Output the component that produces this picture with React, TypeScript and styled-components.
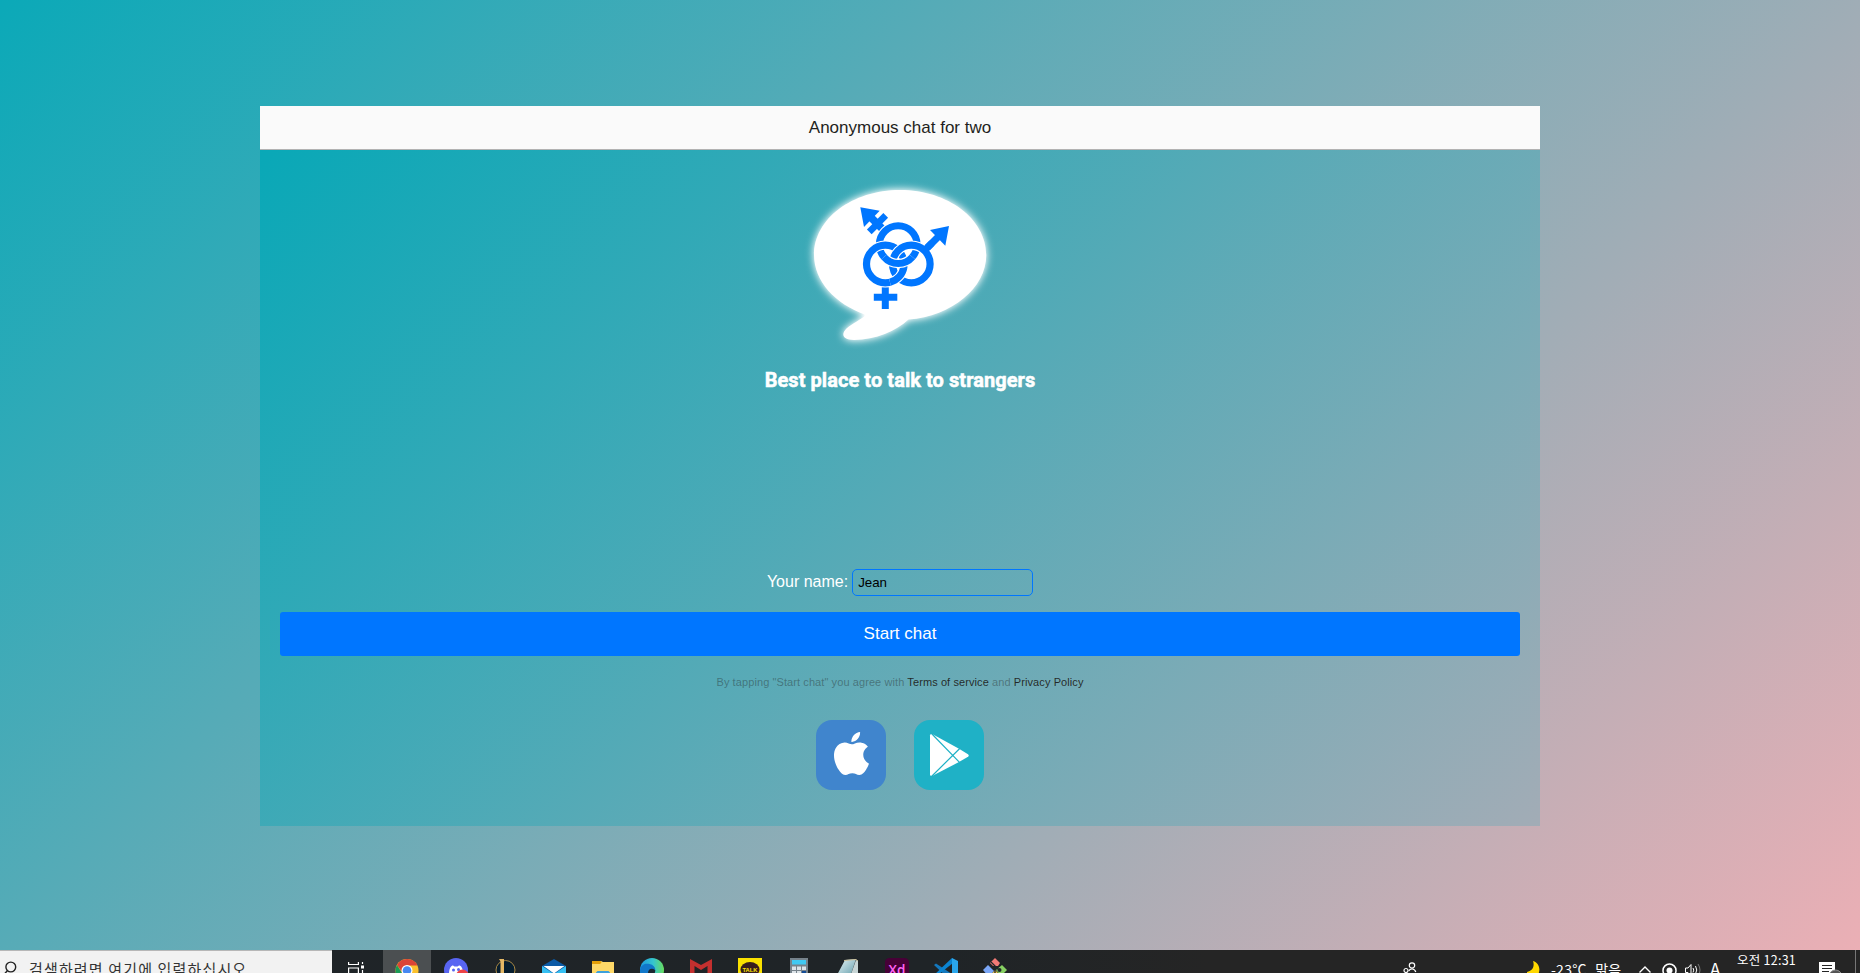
import React from 'react';
import styled, { createGlobalStyle } from 'styled-components';
import { SiApple } from 'react-icons/si';

const Global = createGlobalStyle`
  * { box-sizing: border-box; }
  html, body { margin: 0; height: 973px; overflow: hidden; }
  body { font-family: "Liberation Sans", Arial, sans-serif; }
`;

const Screen = styled.div`
  display: flex;
  flex-direction: column;
  width: 1860px;
  height: 973px;
  overflow: hidden;
`;

const Page = styled.main`
  height: 950px;
  flex: none;
  padding: 106px 60px 0 0;
  display: flex;
  justify-content: center;
  align-items: flex-start;
  background: linear-gradient(135deg, #0ba9b8 0%, #ebafb5 100%);
`;

const Panel = styled.section`
  width: 1280px;
  height: 720px;
  overflow: hidden;
  display: flex;
  flex-direction: column;
`;

const Header = styled.header`
  flex: none;
  height: 44px;
  background: #fafafa;
  border-bottom: 1px solid #b2b2b2;
  text-align: center;
  font-size: 17px;
  line-height: 43px;
  color: #1f1f21;
`;

const Body = styled.div`
  flex: none;
  height: 676px;
  display: flex;
  flex-direction: column;
  align-items: center;
  padding: 30px 20px 0;
  background: linear-gradient(135deg, #09a8b7 0%, #a2acb6 100%);
`;

const Logo = styled.svg`
  width: 200px;
  height: 170px;
  flex: none;
  display: block;
  overflow: visible;
`;

const Slogan = styled.h1`
  margin: 18px 0 0;
  font: 700 20px/24px Roboto, sans-serif;
  letter-spacing: 0.06px;
  -webkit-text-stroke: 0.5px #fff;
  color: #fff;
`;

const NameRow = styled.div`
  display: flex;
  align-items: center;
  gap: 4px;
  height: 27px;
  margin-top: 177px;
  font-size: 16px;
  color: #fff;
`;

const NameLabel = styled.label`
  padding-bottom: 2px;
`;

const NameInput = styled.input`
  width: 181px;
  height: 27px;
  padding: 1px 5px;
  border: 1px solid #0076ff;
  border-radius: 5px;
  background: transparent;
  font: 13.33px "Liberation Sans", Arial, sans-serif;
  color: #000;
  outline: none;
`;

const StartButton = styled.button`
  width: 100%;
  height: 44px;
  margin-top: 16px;
  flex: none;
  border: 0;
  border-radius: 3px;
  background: #0076ff;
  color: #fff;
  font: 17px/42px "Liberation Sans", Arial, sans-serif;
`;

const Terms = styled.p`
  margin: 20px 0 0;
  font-size: 11px;
  line-height: 13px;
  letter-spacing: 0.09px;
  color: rgba(31, 31, 33, 0.4);
`;

const TermsLink = styled.a`
  color: rgba(31, 31, 33, 0.95);
`;

const Stores = styled.div`
  display: flex;
  gap: 28px;
  margin-top: 31px;
`;

const StoreTile = styled.a<{ $color: string }>`
  width: 70px;
  height: 70px;
  display: flex;
  align-items: center;
  justify-content: center;
  border-radius: 16px;
  background: ${p => p.$color};
  color: #fff;
`;

const AppleMark = styled(SiApple)`
  margin: 0 0 3px;
`;

const Taskbar = styled.footer`
  height: 23px;
  flex: none;
  display: flex;
  overflow: hidden;
  background: linear-gradient(90deg, #1f2428 0%, #1f2427 50%, #252525 65%);
  color: #fff;
  font-family: "Noto Sans CJK KR", sans-serif;
`;

const SearchBox = styled.div`
  width: 332px;
  height: 23px;
  flex: none;
  display: flex;
  gap: 11px;
  padding-left: 3px;
  border-top: 1px solid #b7b7b7;
  background: #f2f2f2;
  color: #333;
  font-size: 15px;
  line-height: 20px;
  white-space: nowrap;
  svg { flex: none; margin-top: 10px; }
`;

const SearchText = styled.span`
  margin-top: 8px;
  letter-spacing: 1.15px;
`;

const TaskView = styled.div`
  width: 51px;
  height: 23px;
  flex: none;
  padding: 12px 0 0 16px;
  svg { display: block; }
`;

const AppSlot = styled.div<{ $active?: boolean }>`
  width: ${p => (p.$active ? 48 : 49)}px;
  height: 23px;
  flex: none;
  display: flex;
  justify-content: center;
  padding-top: 8px;
  background: ${p => (p.$active ? '#4b4f51' : 'transparent')};
  svg { flex: none; display: block; }
`;

const Tray = styled.div`
  margin-left: auto;
  width: 457px;
  flex: none;
  display: flex;
  height: 23px;
  white-space: nowrap;
  svg { flex: none; display: block; }
`;

const TrayItem = styled.div<{ $w: number; $top: number }>`
  width: ${p => p.$w}px;
  flex: none;
  padding-top: ${p => p.$top}px;
  line-height: 18px;
`;

const Weather = styled(TrayItem)`
  font-size: 14px;
  letter-spacing: 0.25px;
  word-spacing: 5px;
`;

const Clock = styled(TrayItem)`
  font-size: 12.5px;
  letter-spacing: 0.25px;
`;

const Ime = styled(TrayItem)`
  font-size: 17px;
`;

const DesktopEdge = styled.div`
  width: 5px;
  height: 23px;
  margin-left: auto;
  border-left: 1px solid #777;
`;

/* A ring segment with a thin white outline, so that it reads as passing over the others. */
const Strand = ({ d }: { d: string }) => (
  <g fill="none">
    <path d={d} stroke="#fff" strokeWidth="9.4" />
    <path d={d} stroke="#0076ff" strokeWidth="7.2" />
  </g>
);

const ring = (cx: number, cy: number, r = 18.8) =>
  `M${cx - r} ${cy}a${r} ${r} 0 1 1 ${2 * r} 0a${r} ${r} 0 1 1 ${-2 * r} 0`;

const GenderLogo = () => (
  <Logo viewBox="800 180 200 170">
    <defs>
      <filter id="glow" x="-20%" y="-20%" width="140%" height="140%">
        <feGaussianBlur stdDeviation="4" />
        <feComponentTransfer>
          <feFuncA type="linear" slope="1.25" />
        </feComponentTransfer>
      </filter>
      <path
        id="bubble"
        d="M900 190C948 190 986.300 219 986.300 255C986.300 288 952 316 908.500 319.600C896 331 876 340 854 340C842 340 841 333.500 846.500 328.500C853 323 861 319.500 866 315C835 304 814 281 814 255C814 219 852 190 900 190Z"
      />
    </defs>
    <use href="#bubble" fill="#fff" filter="url(#glow)" />
    <use href="#bubble" fill="#fff" />
    <g fill="none" stroke="#0076ff">
      <path d="M885.300 283V309M873.800 297.200H897.300" strokeWidth="7" />
      <path d="M924.500 250.500L942 233" strokeWidth="7" />
      <path d="M868 214.500L886 232.500" strokeWidth="7.600" />
      <path d="M869.300 231.800L885.700 215.400" strokeWidth="6.600" />
    </g>
    <path d="M860.300 207.200L879.700 210.700L864 227Z" fill="#0076ff" />
    <path d="M949 226L945.300 245.700L930 230Z" fill="#0076ff" />
    <Strand d={ring(898.2, 244.6)} />
    <Strand d={ring(885.3, 264)} />
    <Strand d={ring(911.3, 264)} />
    <path d="M923 252L932 243" stroke="#0076ff" strokeWidth="7" />
    <Strand d="M903.8 267.500A18.800 18.800 0 0 1 890 282.200" />
    <Strand d="M884 257A18.800 18.800 0 0 0 912.400 257" />
  </Logo>
);

const PlayLogo = () => (
  <svg width="70" height="70" viewBox="0 0 70 70">
    <path d="M16 15.500Q16 13.500 18 14L19.500 14.800L45 28.700L54 34.200Q55.500 35.500 54 36.800L45 42L19.500 55.300Q16 57 16 54.500Z" fill="#fff" />
    <path d="M17.500 13.500L46 42.800M17.500 56.500L46 28.200" stroke="#1fb1c6" strokeWidth="1.200" />
  </svg>
);

const icons: React.ReactNode[] = [
  <svg key="discord" width="26" height="24" viewBox="0 0 26 24">
    <circle cx="13" cy="12" r="12" fill="#5865f2" />
    <path d="M6 17C6 10 8 7.500 10 7.500L11.500 8.500H14.500L16 7.500C18 7.500 20 10 20 15L10 17Z" fill="#fff" />
    <circle cx="10.500" cy="12" r="1.500" fill="#5865f2" />
    <circle cx="15.500" cy="11.500" r="1.500" fill="#5865f2" />
    <circle cx="19.500" cy="18" r="6.500" fill="#ed4245" />
  </svg>,
  <svg key="league" width="22" height="24" viewBox="0 0 22 24">
    <circle cx="11.500" cy="12" r="9.500" fill="#071d2e" stroke="#a98743" strokeWidth="1" />
    <path d="M5 1H10V20H5L6.500 17V3.500Z" fill="#e3b765" />
  </svg>,
  <svg key="mail" width="24" height="24" viewBox="0 0 24 24">
    <path d="M0 8L12 1L24 8V22H0Z" fill="#0c5aa6" />
    <path d="M0 8L12 16L24 8V24H0Z" fill="#35bff2" />
    <path d="M1.500 8H22.500L12 15.500Z" fill="#fff" />
  </svg>,
  <svg key="folder" width="22" height="24" viewBox="0 0 22 24">
    <path d="M0 3H9L11 4H22V22H0Z" fill="#ffd968" />
    <path d="M0 3H8.500L9.500 4.500L8 6H0Z" fill="#e6a008" />
    <path d="M4 14.500L5.500 13H16.500L18 14.500V24H4Z" fill="#3ca0dc" />
  </svg>,
  <svg key="edge" width="24" height="24" viewBox="0 0 24 24">
    <defs>
      <linearGradient id="edgeTop">
        <stop offset="0" stopColor="#1c9ade" />
        <stop offset=".55" stopColor="#35c5cf" />
        <stop offset="1" stopColor="#68dd5d" />
      </linearGradient>
    </defs>
    <circle cx="12" cy="12" r="12" fill="url(#edgeTop)" />
    <path d="M0 12C1 6 6 5 9.500 6C14 7 16 10 15 13C13 10 8 12 9 17L12 24C4 24 0 19 0 12Z" fill="#1177c9" />
    <path d="M8 15C8 11 12 9.500 15 12C16 13 14 15 15 17L10 18Z" fill="#1b2730" />
  </svg>,
  <svg key="mcafee" width="22" height="24" viewBox="0 0 22 24">
    <path d="M0 1L11 7L22 1V24H17.500V8L11 12L4.500 8V24H0Z" fill="#c3302f" />
  </svg>,
  <svg key="talk" width="24" height="24" viewBox="0 0 24 24">
    <path d="M0 0H24V24H0Z" fill="#fae100" />
    <ellipse cx="12" cy="11.500" rx="9.500" ry="7.500" fill="#371d1e" />
    <text x="12" y="13.500" textAnchor="middle" fontFamily="Liberation Sans" fontWeight="700" fontSize="5.800" fill="#fae100">TALK</text>
  </svg>,
  <svg key="calc" width="18" height="24" viewBox="0 0 18 24">
    <path d="M0 0H18V24H0Z" fill="#76828b" />
    <path d="M2 2H16V6.500H2Z" fill="#40c9f2" />
    <path d="M2 8.500H6V12H2ZM7 8.500H11V12H7ZM12 8.500H16V12H12ZM2 13H6V16H2ZM7 13H11V16H7Z" fill="#dce3e8" />
    <path d="M12 13H16V16H12Z" fill="#134c97" />
  </svg>,
  <svg key="notepad" width="22" height="24" viewBox="0 0 22 24">
    <defs>
      <linearGradient id="pad" x2="1" y2="1">
        <stop offset="0" stopColor="#e9f6f8" />
        <stop offset="1" stopColor="#5e9aa8" />
      </linearGradient>
    </defs>
    <path d="M8 2L19 1L13 19L0 17Z" fill="url(#pad)" />
    <path d="M19 2L21 3V19H13Z" fill="#c7d5d5" />
    <path d="M7 2.500L19 1.500L21 3" stroke="#cbbf99" fill="none" />
  </svg>,
  <svg key="xd" width="24" height="24" viewBox="0 0 24 24">
    <rect width="24" height="24" rx="4.500" fill="#470137" />
    <text x="12" y="17" textAnchor="middle" fontFamily="Open Sans" fontWeight="600" fontSize="13.500" fill="#ff61f6">Xd</text>
  </svg>,
  <svg key="code" width="24" height="24" viewBox="0 0 24 24">
    <path d="M0 7L2 5.500L24 20V24H18Z" fill="#1478bd" />
    <path d="M0 17L18 0L19 5L2 18.500Z" fill="#0b84d1" />
    <path d="M18 0L24 3V21L18 24Z" fill="#2aa6ec" />
  </svg>,
  <svg key="git" width="24" height="24" viewBox="0 0 24 24">
    <path d="M7 5L12 0L17 5L15 8L10 8Z" fill="#f37a76" />
    <path d="M0 12L5 7L11 13L6 19Z" fill="#7ba7f7" />
    <path d="M24 12L19 7L13 12L18 18Z" fill="#87d062" />
    <path d="M12 12L17 17L12 24L7 18Z" fill="#f4c84d" />
    <path d="M8 4L16 12M12 9V16" stroke="#20272a" strokeWidth="1.300" />
    <circle cx="16.500" cy="12" r="2" fill="#20272a" />
  </svg>,
];

export default function App() {
  return (
    <Screen>
      <Global />
      <Page>
        <Panel>
          <Header>Anonymous chat for two</Header>
          <Body>
            <GenderLogo />
            <Slogan>Best place to talk to strangers</Slogan>
            <NameRow>
              <NameLabel htmlFor="name">Your name:</NameLabel>
              <NameInput id="name" defaultValue="Jean" />
            </NameRow>
            <StartButton>Start chat</StartButton>
            <Terms>
              By tapping "Start chat" you agree with <TermsLink>Terms of service</TermsLink> and{' '}
              <TermsLink>Privacy Policy</TermsLink>
            </Terms>
            <Stores>
              <StoreTile $color="#4085cd"><AppleMark size={43} /></StoreTile>
              <StoreTile $color="#1fb1c6"><PlayLogo /></StoreTile>
            </Stores>
          </Body>
        </Panel>
      </Page>
      <Taskbar>
        <SearchBox>
          <svg width="15" height="16" viewBox="0 0 15 16" fill="none" stroke="#222" strokeWidth="1.400">
            <circle cx="7.800" cy="6" r="4.900" />
            <path d="M4.500 9.500L1 13.500" />
          </svg>
          <SearchText>검색하려면 여기에 입력하십시오</SearchText>
        </SearchBox>
        <TaskView>
          <svg width="17" height="16" viewBox="0 0 17 16" fill="none" stroke="#fff" strokeWidth="1.200">
            <path d="M.6 0V2.500H10.400V0M.6 14V6H10.400V14M14.500 0V2M14.500 8V14" />
            <path d="M13 3.500H16V6.500H13Z" fill="#fff" stroke="none" />
          </svg>
        </TaskView>
        <AppSlot $active>
          <svg width="24" height="24" viewBox="0 0 24 24">
            <circle cx="12" cy="12.500" r="11.500" fill="#fbc12d" />
            <path d="M2 7A11.500 11.500 0 0 1 22.500 7.500H12L7 14Z" fill="#db4437" />
            <path d="M2 7A11.500 11.500 0 0 0 10 24L14 17L7 15Z" fill="#1b9b57" />
            <circle cx="12" cy="12.500" r="5.500" fill="#fff" />
            <circle cx="12" cy="12.500" r="4.300" fill="#4688f1" />
          </svg>
        </AppSlot>
        {icons.map((icon, i) => <AppSlot key={i}>{icon}</AppSlot>)}
        <Tray>
          <TrayItem $w={124} $top={12}>
            <svg width="14" height="15" viewBox="0 0 14 15" fill="none" stroke="#fff" strokeWidth="1.200">
              <circle cx="9" cy="3.500" r="2.700" />
              <circle cx="3" cy="8.500" r="2" />
              <path d="M5.800 9C7 6.300 11.500 6 12.800 10M.5 14Q3 9 5.500 14" />
            </svg>
          </TrayItem>
          <TrayItem $w={24} $top={11}>
            <svg width="13" height="16" viewBox="0 0 13 16">
              <path d="M6 0C12 2 14 8 11 14L8 16H0V11C5 10 8 6 6 0Z" fill="#ffd800" />
            </svg>
          </TrayItem>
          <Weather $w={88} $top={10}>-23°C 맑음</Weather>
          <TrayItem $w={23} $top={16}>
            <svg width="12" height="8" viewBox="0 0 12 8" fill="none" stroke="#fff" strokeWidth="1.400">
              <path d="M.5 6.500L6 1L11.500 6.500" />
            </svg>
          </TrayItem>
          <TrayItem $w={23} $top={13}>
            <svg width="15" height="15" viewBox="0 0 15 15">
              <circle cx="7.500" cy="7.500" r="6.500" fill="none" stroke="#fff" strokeWidth="1.500" />
              <circle cx="7.500" cy="7.500" r="3" fill="#fff" />
            </svg>
          </TrayItem>
          <TrayItem $w={25} $top={13}>
            <svg width="17" height="14" viewBox="0 0 17 14" fill="none" stroke="#fff">
              <path d="M.5 5H3L6 1.500V12.500L3 9.500H.500ZM8 5Q9.500 7 8 9.500M10.500 3Q13 7 10.500 11" />
              <path d="M13 1Q17 7 13 13" stroke="#777" />
            </svg>
          </TrayItem>
          <Ime $w={27} $top={10}>A</Ime>
          <Clock $w={82} $top={1}>오전 12:31</Clock>
          <TrayItem $w={28} $top={12}>
            <svg width="24" height="15" viewBox="0 0 24 15">
              <path d="M0 0H16V12H6L3 15V12H0Z" fill="#fff" />
              <path d="M3 3.500H13M3 6.500H13M3 9.500H10" stroke="#252525" strokeWidth="1.200" />
              <circle cx="16.500" cy="14.500" r="6.500" fill="#555" stroke="#8a8a8a" />
            </svg>
          </TrayItem>
          <DesktopEdge />
        </Tray>
      </Taskbar>
    </Screen>
  );
}
